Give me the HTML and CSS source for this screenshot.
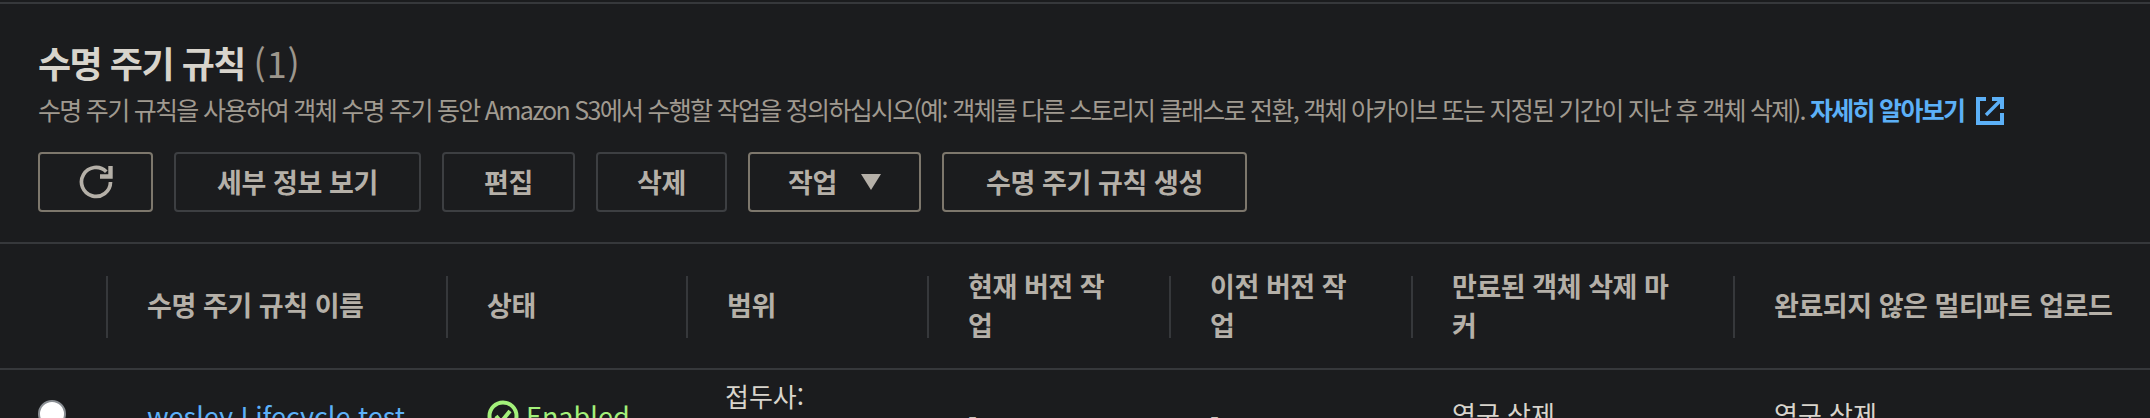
FILE: index.html
```html
<!DOCTYPE html>
<html lang="ko">
<head>
    <meta charset="UTF-8">
    <meta name="viewport" content="width=device-width, initial-scale=1.0">
    <title>수명 주기 규칙</title>
    <link rel="stylesheet" href="styles.css">
</head>
<body>
    <section class="panel">
        <div class="panel-head">
            <h2 class="panel-title">수명 주기 규칙 <span class="count">(1)</span></h2>
            <p class="panel-desc">수명 주기 규칙을 사용하여 객체 수명 주기 동안 Amazon S3에서 수행할 작업을 정의하십시오(예: 객체를 다른 스토리지 클래스로 전환, 객체 아카이브 또는 지정된 기간이 지난 후 객체 삭제). <a href="#" class="learn">자세히 알아보기<svg class="ext-icon" viewBox="0 0 28 28" fill="none" stroke="currentColor" stroke-width="4"><path d="M10 2H2v24h24V16"/><path d="M16 2h10v10"/><path d="M25 3L10 18" stroke-width="3.4"/></svg></a></p>
            <div class="actions">
                <button class="btn btn-icon"><svg class="refresh" viewBox="0 0 36 36" fill="none" stroke="currentColor" stroke-width="3.7"><path d="M28.3 7.7A14.5 14.5 0 1 0 32.5 18"/><path d="M32.5 2v10.5H22" stroke-width="4.4"/></svg></button>
                <button class="btn btn-off w-detail">세부 정보 보기</button>
                <button class="btn btn-off w-edit">편집</button>
                <button class="btn btn-off w-del">삭제</button>
                <button class="btn w-action">작업<span class="caret"></span></button>
                <button class="btn w-create">수명 주기 규칙 생성</button>
            </div>
        </div>
        <table class="rules">
            <thead>
                <tr>
                    <th class="c-radio"></th>
                    <th class="c-name"><div class="th-in">수명 주기 규칙 이름</div></th>
                    <th class="c-state"><div class="th-in">상태</div></th>
                    <th class="c-scope"><div class="th-in">범위</div></th>
                    <th class="c-cur"><div class="th-in">현재 버전 작업</div></th>
                    <th class="c-prev"><div class="th-in">이전 버전 작업</div></th>
                    <th class="c-marker"><div class="th-in">만료된 객체 삭제 마커</div></th>
                    <th class="c-multi"><div class="th-in">완료되지 않은 멀티파트 업로드</div></th>
                </tr>
            </thead>
            <tbody>
                <tr>
                    <td class="radio-cell"><span class="radio"></span></td>
                    <td class="name-cell"><a href="#">wesley Lifecycle test</a></td>
                    <td class="state-cell"><span class="ok"><svg class="ok-icon" viewBox="0 0 32 32" fill="none" stroke="currentColor" stroke-width="4"><circle cx="16" cy="16" r="13.5"/><path d="M9 16l5 6 9-11"/></svg>Enabled</span></td>
                    <td class="scope-cell">접두사:</td>
                    <td class="dash-cell">-</td>
                    <td class="dash-cell">-</td>
                    <td class="del-cell">영구 삭제</td>
                    <td class="del-cell">영구 삭제</td>
                </tr>
            </tbody>
        </table>
    </section>
</body>
</html>
```
FILE: styles.css
```css
html, body {
    margin: 0;
    padding: 0;
    height: 418px;
    overflow: hidden;
    background: #1b1c1e;
}

body {
    font-family: "Noto Sans CJK KR", "Noto Sans", sans-serif;
    color: #b5b0a8;
}

.panel {
    border-top: 2px solid #36383b;
    margin-top: 2px;
}

.panel-head {
    padding: 35px 38px 30px;
    border-bottom: 2px solid #36383b;
}

.panel-title {
    margin: 0;
    font-size: 36px;
    line-height: 46px;
    font-weight: 700;
    letter-spacing: -1.5px;
    color: #d8d4cc;
}

.count {
    font-weight: 400;
    letter-spacing: 1px;
    color: #9c968c;
}

.panel-desc {
    margin: 4px 0 0;
    font-size: 25px;
    line-height: 40px;
    letter-spacing: -1.71px;
    color: #a09a90;
    white-space: nowrap;
}

.learn {
    color: #5cb0f7;
    font-weight: 700;
    text-decoration: none;
}

.ext-icon {
    width: 28px;
    height: 28px;
    margin-left: 12px;
    vertical-align: -5px;
}

.actions {
    display: flex;
    gap: 21px;
    margin-top: 23px;
}

.btn {
    box-sizing: border-box;
    height: 60px;
    padding: 0 0 2px;
    display: flex;
    align-items: center;
    justify-content: center;
    background: #1b1c1e;
    border: 2px solid #7d776c;
    border-radius: 4px;
    font-family: inherit;
    font-size: 27px;
    font-weight: 700;
    letter-spacing: -0.4px;
    color: #b5b0a8;
}

.btn-off {
    border-color: #3d3f42;
}

.btn-icon { width: 115px; padding: 0; }
.w-detail { width: 247px; }
.w-edit { width: 133px; }
.w-del { width: 131px; }
.w-action { width: 173px; }
.w-create { width: 305px; }

.refresh {
    width: 36px;
    height: 36px;
}

.caret {
    width: 0;
    height: 0;
    margin: 2px 0 0 24px;
    border-left: 10px solid transparent;
    border-right: 10px solid transparent;
    border-top: 16px solid #b5b0a8;
}

.rules {
    width: 2150px;
    table-layout: fixed;
    border-collapse: collapse;
}

.rules th {
    padding: 32px 0 30px;
    border-bottom: 2px solid #36383b;
    font-size: 27px;
    line-height: 39px;
    font-weight: 700;
    letter-spacing: -0.45px;
    text-align: left;
    vertical-align: top;
}

.th-in {
    box-sizing: border-box;
    display: flex;
    align-items: center;
    height: 62px;
    padding: 0 55px 5px 39px;
    border-left: 2px solid #36383b;
    word-break: break-all;
}

.c-radio { width: 106px; }
.c-name { width: 340px; }
.c-state { width: 240px; }
.c-scope { width: 241px; }
.c-cur { width: 242px; }
.c-prev { width: 242px; }
.c-marker { width: 322px; }

.c-multi .th-in {
    padding-right: 0;
}

.rules td {
    padding: 0 0 0 41px;
    font-size: 26px;
    line-height: 40px;
    color: #d8d4cc;
    vertical-align: top;
}

.rules .radio-cell {
    padding: 30px 0 0 38px;
}

.radio {
    box-sizing: border-box;
    display: block;
    width: 28px;
    height: 28px;
    border-radius: 50%;
    background: #fff;
    border: 2px solid #8a8f94;
}

.rules .name-cell {
    padding-top: 26px;
    font-size: 27px;
}

.name-cell a {
    color: #5cb0f7;
    text-decoration: none;
}

.rules .state-cell {
    padding-top: 26px;
    font-size: 27px;
}

.ok {
    display: flex;
    align-items: center;
    gap: 7px;
    color: #a3f07a;
}

.ok-icon {
    width: 32px;
    height: 32px;
    flex: none;
}

.rules .scope-cell {
    padding: 6px 0 0 39px;
}

.rules .dash-cell {
    padding-top: 27px;
}

.rules .del-cell {
    padding-top: 24px;
}
```
